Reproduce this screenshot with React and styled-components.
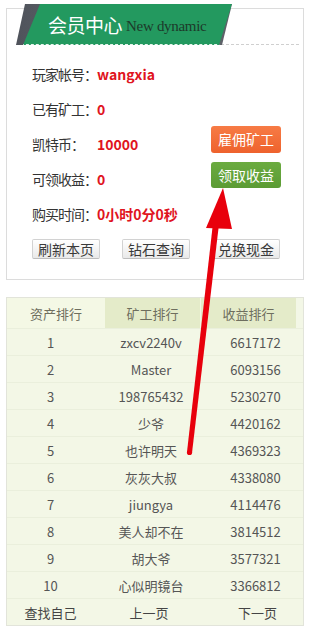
import React from 'react'
import styled, { createGlobalStyle } from 'styled-components'

const GlobalStyle = createGlobalStyle`
  body {
    margin: 0;
    background: #fff;
    font-family: "Noto Sans CJK SC", "Noto Sans", sans-serif;
  }
`

const info = [
  { label: '玩家帐号：', value: 'wangxia' },
  { label: '已有矿工：', value: '0' },
  { label: '凯特币：', value: '10000' },
  { label: '可领收益：', value: '0' },
  { label: '购买时间：', value: '0小时0分0秒' }
]

const ranks = [
  ['1', 'zxcv2240v', '6617172'],
  ['2', 'Master', '6093156'],
  ['3', '198765432', '5230270'],
  ['4', '少爷', '4420162'],
  ['5', '也许明天', '4369323'],
  ['6', '灰灰大叔', '4338080'],
  ['7', 'jiungya', '4114476'],
  ['8', '美人却不在', '3814512'],
  ['9', '胡大爷', '3577321'],
  ['10', '心似明镜台', '3366812']
]

export default function App () {
  return (
    <Page>
      <GlobalStyle />
      <Card>
        <Header>
          <Banner>
            <Ribbon>
              <Title>会员中心</Title>
              <Sub>New dynamic</Sub>
            </Ribbon>
          </Banner>
        </Header>
        <InfoArea>
          <InfoList>
            {info.map(item => (
              <InfoRow key={item.label}>
                <Label>{item.label}</Label>
                <Value>{item.value}</Value>
              </InfoRow>
            ))}
          </InfoList>
          <Actions>
            <ActionButton color='orange'>雇佣矿工</ActionButton>
            <ActionButton color='green'>领取收益</ActionButton>
          </Actions>
        </InfoArea>
        <ToolRow>
          <ToolButton>刷新本页</ToolButton>
          <ToolButton>钻石查询</ToolButton>
          <ToolButton>兑换现金</ToolButton>
        </ToolRow>
      </Card>

      <Board>
        <Tabs>
          <Tab>资产排行</Tab>
          <Tab active>矿工排行</Tab>
          <Tab active divider>收益排行</Tab>
        </Tabs>
        {ranks.map(r => (
          <RankRow key={r[0]}>
            <Cell>{r[0]}</Cell>
            <Cell>{r[1]}</Cell>
            <Cell>{r[2]}</Cell>
          </RankRow>
        ))}
        <RankRow footer>
          <Cell>查找自己</Cell>
          <Cell shift='-2px'>上一页</Cell>
          <Cell shift='2px'>下一页</Cell>
        </RankRow>
      </Board>

      <Arrow viewBox='0 0 321 638' width='321' height='638'>
        <polygon points='187,452 192,453 219,224 213,223' fill='#e8000c' />
        <circle cx='189.5' cy='452.5' r='2.6' fill='#e8000c' />
        <polygon points='223,188 206,228 232,229' fill='#e8000c' />
      </Arrow>
    </Page>
  )
}

const Page = styled.div`
  position: relative;
  width: 321px;
  min-height: 638px;
  padding-top: 8px;
  box-sizing: border-box;
`

const Card = styled.div`
  margin-left: 6px;
  width: 298px;
  border: 1px solid #dcdcdc;
  box-sizing: border-box;
  padding-bottom: 20px;
`

const Header = styled.div`
  display: flex;
  height: 40px;
  margin: -5px 4px 0 9px;
  border-bottom: 1px dashed #cfcfcf;
`

const Banner = styled.div`
  position: relative;
  z-index: 1;
  width: 216px;
  height: 41px;
  background: linear-gradient(90deg, #4f535b 0%, #6d7178 60%, #5b5f66 100%);
  clip-path: polygon(9px 0, 216px 0, 206px 41px, 0 41px);
`

const Ribbon = styled.div`
  position: relative;
  display: flex;
  align-items: center;
  height: 100%;
  padding-left: 32px;
  background: #23995f;
  clip-path: polygon(24px 0, 216px 0, 203px 41px, 7px 41px);
  &::after {
    content: '';
    position: absolute;
    left: 0;
    right: 0;
    bottom: 0;
    border-top: 1px dashed rgba(255, 255, 255, 0.9);
  }
`

const Title = styled.span`
  color: #fff;
  font-size: 19px;
  letter-spacing: -0.5px;
`

const Sub = styled.span`
  margin-left: 4px;
  margin-top: 3px;
  color: #1d3a2a;
  font-family: "Liberation Serif", serif;
  font-size: 15px;
  letter-spacing: -0.3px;
`

const InfoArea = styled.div`
  display: flex;
  padding: 11px 22px 0 25px;
`

const InfoList = styled.div`
  display: flex;
  flex-direction: column;
`

const InfoRow = styled.div`
  display: flex;
  align-items: center;
  height: 35px;
`

const Label = styled.span`
  width: 65px;
  white-space: nowrap;
  letter-spacing: -1px;
  color: #333;
  font-size: 14px;
`

const Value = styled.span`
  color: #e0141e;
  font-size: 14px;
  font-weight: bold;
`

const Actions = styled.div`
  display: flex;
  flex-direction: column;
  gap: 9px;
  margin-left: auto;
  padding-top: 70px;
`

const ActionButton = styled.div`
  width: 70px;
  height: ${p => (p.color === 'orange' ? '27px' : '26px')};
  line-height: ${p => (p.color === 'orange' ? '27px' : '26px')};
  border-radius: 3px;
  text-align: center;
  color: #fff;
  font-size: 14px;
  background: ${p =>
    p.color === 'orange'
      ? 'linear-gradient(#f77b45, #ee622d)'
      : 'linear-gradient(#6bab40, #5b9b34)'};
`

const ToolRow = styled.div`
  display: flex;
  gap: 22px;
  margin-top: 8px;
  padding-left: 25px;
`

const ToolButton = styled.div`
  width: 68px;
  height: 20px;
  line-height: 19px;
  box-sizing: border-box;
  border: 1px solid #d2d2d2;
  border-bottom-color: #bdbdbd;
  border-radius: 2px;
  background: linear-gradient(#ffffff, #e9e9e9);
  text-align: center;
  color: #3a3a3a;
  font-size: 14px;
`

const Board = styled.div`
  margin: 17px 0 0 6px;
  width: 298px;
  border: 1px solid #e2e4da;
  box-sizing: border-box;
  background: #f3f7e6;
`

const Tabs = styled.div`
  display: grid;
  grid-template-columns: 98px 95px 96px;
  height: 30px;
`

const Tab = styled.div`
  display: flex;
  align-items: center;
  justify-content: center;
  color: #6e6e5e;
  font-size: 13px;
  background: ${p => (p.active ? '#e4ebc9' : '#f4f8e5')};
  border-left: ${p => (p.divider ? '1px solid #f3f7e6' : 'none')};
`

const RankRow = styled.div`
  display: grid;
  grid-template-columns: 87px 114px 95px;
  height: 27px;
  box-sizing: border-box;
  border-top: 1px solid #eaefdc;
  color: ${p => (p.footer ? '#444' : '#555')};
  font-size: 13px;
`

const Cell = styled.div`
  display: flex;
  align-items: center;
  justify-content: center;
  transform: translateX(${p => p.shift || '0'});
`

const Arrow = styled.svg`
  position: absolute;
  top: 0;
  left: 0;
  pointer-events: none;
`
